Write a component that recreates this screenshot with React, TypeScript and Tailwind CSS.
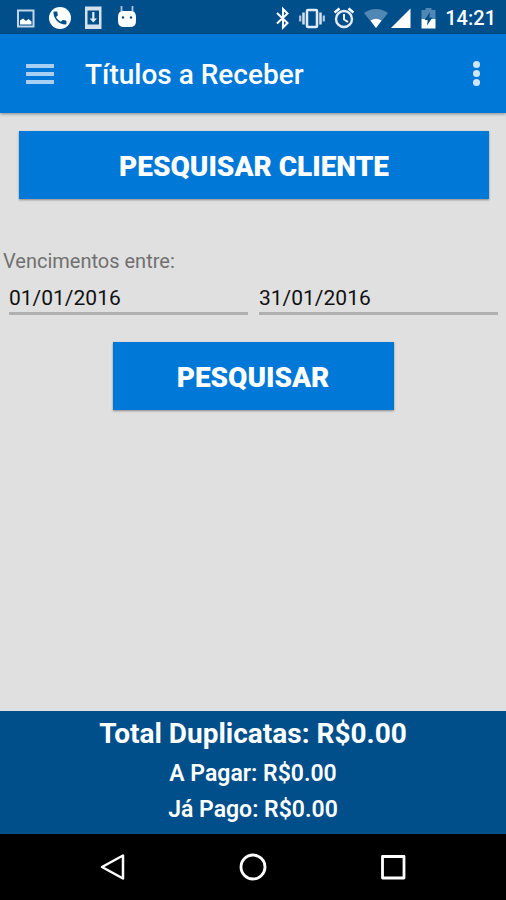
import { useState } from "react";

function StatusBar() {
  return (
    <div className="flex h-[34px] items-center justify-between bg-[#004f8b] pt-px pl-[14px] pr-[10px] text-white">
      <div className="flex items-center gap-[10px]">
        <svg className="size-6" viewBox="0 0 24 24" aria-hidden="true">
          <rect x="4" y="4.500" width="15.500" height="16" fill="none" stroke="#c3d6e8" strokeWidth="2" />
          <path d="M6 18.500V14.500l3-2 3 2.500 2.500-2 3 2.500v3z" fill="#fff" />
        </svg>
        <svg className="size-6" viewBox="0 0 24 24" aria-hidden="true">
          <circle cx="12" cy="12" r="11" fill="#fff" />
          <path
            transform="translate(3.300 3.300) scale(.72)"
            d="M6.620 10.790c1.440 2.830 3.760 5.140 6.590 6.590l2.200-2.200c.27-.27.67-.36 1.020-.24 1.120.37 2.330.57 3.570.57.55 0 1 .45 1 1V20c0 .55-.45 1-1 1C10.610 21 3 13.390 3 4c0-.55.45-1 1-1h3.500c.55 0 1 .45 1 1 0 1.250.2 2.450.57 3.570.11.35.03.74-.25 1.020z"
            fill="#004f8b"
          />
        </svg>
        <svg className="size-6" viewBox="0 0 24 24" aria-hidden="true">
          <path d="M3 .5h16.500v22.500H3z" fill="#d5e2ee" />
          <path d="M5.500 4.500h11.500v14H5.500z" fill="#004f8b" />
          <path d="M10.200 6h2.200v6.500h2.600l-3.700 4-3.700-4h2.600z" fill="#e3ecf4" />
        </svg>
        <svg className="size-6" viewBox="0 0 24 24" aria-hidden="true">
          <path d="M5.500 0v6M16.500 0v6" stroke="#a9c6de" strokeWidth="1.800" />
          <path d="M2 11q0-6 5-6h8q5 0 5 6v4q0 6-6 6h-6q-6 0-6-6z" fill="#fff" />
          <circle cx="7" cy="11.500" r="1.200" fill="#004f8b" />
          <circle cx="15" cy="11.500" r="1.200" fill="#004f8b" />
        </svg>
      </div>
      <div className="flex items-center">
        <svg className="mr-2 h-6 w-4" viewBox="0 0 16 24" fill="none" stroke="#fff" strokeWidth="2" aria-hidden="true">
          <path d="M2 7l10.500 10L8 21.500V3l4.500 4.500L2 17.500" />
        </svg>
        <svg className="mr-2 h-6 w-[26px]" viewBox="0 0 26 24" fill="none" aria-hidden="true">
          <rect x="8" y="4" width="10" height="17" rx="1" stroke="#e3ecf4" strokeWidth="2.500" />
          <path d="M4.500 6.500v12M21.500 6.500v12" stroke="#d5e2ee" strokeWidth="2.500" />
          <path d="M1.200 9.500v6M24.800 9.500v6" stroke="#b0c8de" strokeWidth="2.200" />
        </svg>
        <svg className="mr-2 h-6 w-[22px]" viewBox="0 0 22 24" fill="none" stroke="#fff" aria-hidden="true">
          <circle cx="11" cy="13" r="8" stroke="#e3ecf4" strokeWidth="2.400" />
          <path d="M1.500 6.500L6.500 2.500M20.500 6.500L15.500 2.500" strokeWidth="2.400" />
          <path d="M11 8v5.500l4 2.500" strokeWidth="1.800" />
        </svg>
        <svg className="mr-[2px] h-6 w-[26px]" viewBox="0 0 26 24" aria-hidden="true">
          <path d="M1 7Q13-1 25 7L13 22z" fill="#5088b3" />
          <path d="M7.500 14.500q5.500-3.500 11 0L13 22z" fill="#fff" />
        </svg>
        <svg className="mr-[10px] h-6 w-5" viewBox="0 0 20 24" aria-hidden="true">
          <path d="M0 22L19.500 2.500V22z" fill="#fff" />
        </svg>
        <svg className="mr-[9px] h-6 w-[15px]" viewBox="0 0 15 24" aria-hidden="true">
          <path d="M.5 4h4V2h6v2h4v9H.5z" fill="#5088b3" />
          <path d="M.5 13h14v9.500H.5z" fill="#fff" />
          <path d="M9 6l-5.500 8h3.200L6 19.500l5.500-8H8.300z" fill="#004f8b" />
        </svg>
        <span className="text-[20px] leading-6 font-medium">14:21</span>
      </div>
    </div>
  );
}

function AppBar() {
  return (
    <header className="z-10 flex h-[79px] items-center bg-[#0078d7] pr-[14px] pl-[26px] text-white shadow-[0_1px_3px_rgba(0,0,0,0.4)]">
      <button type="button" aria-label="Menu" className="flex w-7 flex-col gap-1">
        <span className="h-1 w-full bg-[#a9d0f3]" />
        <span className="h-1 w-full bg-[#a9d0f3]" />
        <span className="h-1 w-full bg-[#a9d0f3]" />
      </button>
      <h1 className="ml-[31px] flex-1 pt-[2px] text-[28px] leading-8 font-medium">Títulos a Receber</h1>
      <button type="button" aria-label="Mais opções" className="flex w-8 flex-col items-center gap-[2px]">
        <span className="size-[7px] rounded-full bg-[#cfe6fa]" />
        <span className="size-[7px] rounded-full bg-[#cfe6fa]" />
        <span className="size-[7px] rounded-full bg-[#cfe6fa]" />
      </button>
    </header>
  );
}

const actionButton =
  "h-[68px] bg-[#0078d7] pt-1 text-[28px] leading-8 font-black text-white shadow-[0_1px_2px_rgba(0,0,0,0.4)]";
const dateField =
  "h-8 min-w-0 flex-1 border-b-[3px] border-[#b0b0b0] bg-transparent text-[21px] leading-6 text-[#111] outline-none";

export default function App() {
  const [from, setFrom] = useState("01/01/2016");
  const [to, setTo] = useState("31/01/2016");

  return (
    <div className="flex min-h-screen flex-col bg-[#e0e0e0] font-[Roboto,sans-serif]">
      <StatusBar />
      <AppBar />
      <main className="flex flex-1 flex-col pt-[18px]">
        <button type="button" className={`mr-[17px] ml-[19px] ${actionButton}`}>
          PESQUISAR CLIENTE
        </button>
        <label htmlFor="from" className="mt-[50px] ml-[3px] text-[20px] leading-6 text-[#707070]">
          Vencimentos entre:
        </label>
        <div className="mt-[10px] flex gap-[11px] pr-2 pl-[9px]">
          <input id="from" value={from} onChange={(e) => setFrom(e.target.value)} className={dateField} />
          <input
            aria-label="Vencimento final"
            value={to}
            onChange={(e) => setTo(e.target.value)}
            className={dateField}
          />
        </div>
        <button type="button" className={`mt-[27px] w-[281px] self-center ${actionButton}`}>
          PESQUISAR
        </button>
      </main>
      <footer className="flex flex-col items-center bg-[#004f8b] pt-[5px] pb-[6px] text-white">
        <p className="text-[28px] leading-9 font-bold">Total Duplicatas: R$0.00</p>
        <p className="mt-1 text-[23px] leading-9 font-semibold">A Pagar: R$0.00</p>
        <p className="text-[23px] leading-9 font-semibold">Já Pago: R$0.00</p>
      </footer>
      <nav className="flex h-[66px] items-center justify-center gap-[108px] bg-black">
        <button type="button" aria-label="Voltar">
          <svg className="size-8" viewBox="0 0 32 32" fill="none" stroke="#fff" strokeWidth="2.500" strokeLinejoin="round">
            <path d="M26 4.500v23L5 16z" />
          </svg>
        </button>
        <button type="button" aria-label="Início">
          <svg className="size-8" viewBox="0 0 32 32" fill="none" stroke="#fff" strokeWidth="2.800">
            <circle cx="16" cy="16" r="12" />
          </svg>
        </button>
        <button type="button" aria-label="Recentes">
          <svg className="size-8" viewBox="0 0 32 32" fill="none" stroke="#fff" strokeWidth="2.800" strokeLinejoin="round">
            <rect x="5.500" y="5.500" width="21.500" height="21.500" />
          </svg>
        </button>
      </nav>
    </div>
  );
}
